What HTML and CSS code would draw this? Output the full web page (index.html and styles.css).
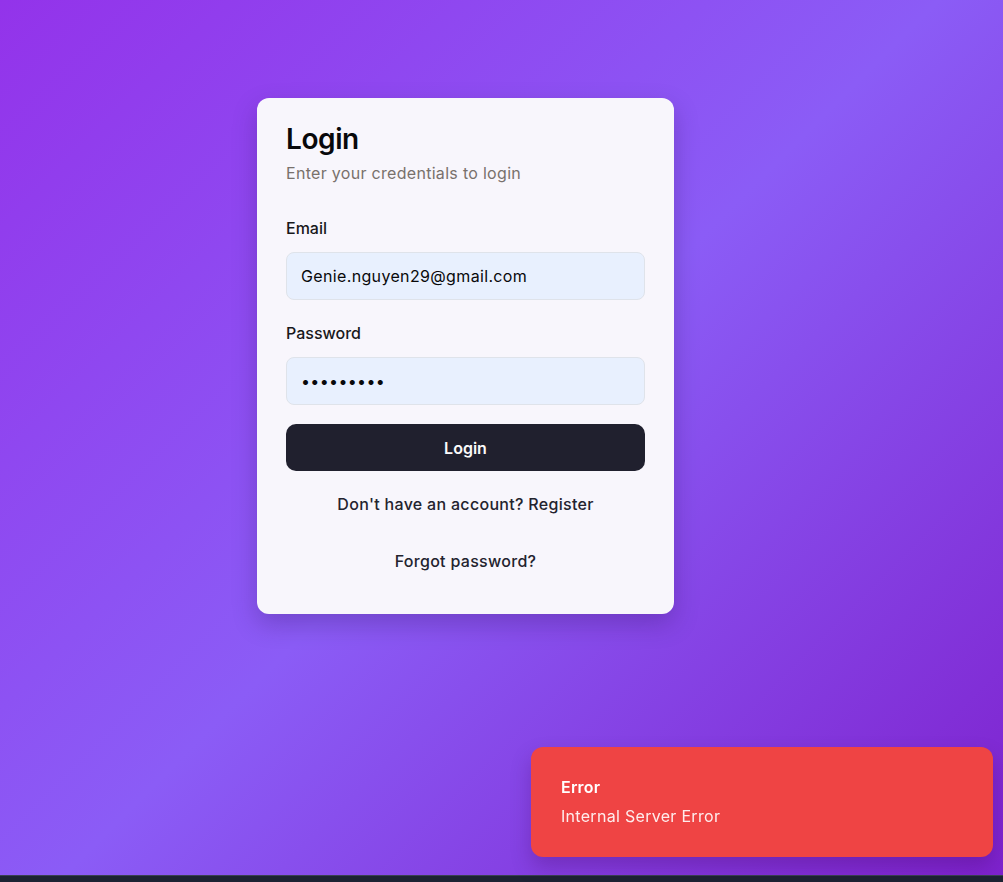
FILE: index.html
```html
<!DOCTYPE html>
<html lang="en">
<head>
<meta charset="utf-8">
<title>Login</title>
<link rel="stylesheet" href="styles.css">
</head>
<body>
<main class="page">
  <section class="card">
    <header class="card-header">
      <h1 class="title">Login</h1>
      <p class="subtitle">Enter your credentials to login</p>
    </header>
    <form class="form">
      <div class="field">
        <label class="label" for="email">Email</label>
        <input class="input" id="email" type="email" value="Genie.nguyen29@gmail.com">
      </div>
      <div class="field">
        <label class="label" for="password">Password</label>
        <input class="input" id="password" type="password" value="password1">
      </div>
      <button class="btn" type="button">Login</button>
    </form>
    <div class="links">
      <a class="link" href="#">Don't have an account? Register</a>
      <a class="link" href="#">Forgot password?</a>
    </div>
  </section>
</main>
<footer class="bottom-bar"></footer>
<div class="toast" role="alert">
  <div class="toast-title">Error</div>
  <div class="toast-msg">Internal Server Error</div>
</div>
</body>
</html>
```

FILE: styles.css
```css
* { box-sizing: border-box; }
html, body { margin: 0; padding: 0; }
body {
  font-family: Inter, "Noto Sans", sans-serif;
  color: #09090b;
  height: 882px;
  overflow: hidden;
  display: flex;
  flex-direction: column;
}
.page {
  flex: 1;
  background: linear-gradient(135deg, #9333ea 0%, #8b5cf6 50%, #7e22ce 100%);
  padding: 98px 0 0 257px;
}
.bottom-bar {
  height: 7px;
  background: #1c2333;
  border-top: 1px solid #3a4152;
}
.card {
  width: 417px;
  background: #f8f6fc;
  border-radius: 12px;
  box-shadow: 0 10px 25px rgba(40, 10, 80, 0.25);
  padding: 24px 29px 41px;
}
.title {
  margin: 0;
  font-size: 28px;
  line-height: 35px;
  font-weight: 600;
  letter-spacing: -0.4px;
}
.subtitle {
  margin: 4px 0 0;
  font-size: 16px;
  line-height: 24px;
  color: #78716c;
  letter-spacing: 0.3px;
}
.form {
  margin-top: 31px;
  display: flex;
  flex-direction: column;
}
.field {
  display: flex;
  flex-direction: column;
  gap: 12px;
  margin-bottom: 21px;
}
.field + .field { margin-bottom: 19px; }
.label {
  font-size: 16px;
  line-height: 24px;
  font-weight: 500;
  color: #18181b;
}
.input {
  height: 48px;
  border: 1px solid #dfe3ea;
  border-radius: 8px;
  background: #e8f0fe;
  padding: 0 14px;
  font-family: inherit;
  font-size: 16px;
  letter-spacing: 0.35px;
  color: #09090b;
  outline: none;
}
.btn {
  height: 47px;
  border: 0;
  border-radius: 10px;
  background: #20202e;
  color: #fafafa;
  font-family: inherit;
  font-size: 16px;
  font-weight: 600;
}
.links {
  margin-top: 21px;
  display: flex;
  flex-direction: column;
  align-items: center;
  gap: 33px;
}
.link {
  font-size: 16px;
  line-height: 24px;
  font-weight: 500;
  letter-spacing: 0.3px;
  color: #23232e;
  text-decoration: none;
}
.toast {
  position: fixed;
  right: 10px;
  bottom: 25px;
  width: 462px;
  height: 110px;
  background: #ef4444;
  border-radius: 12px;
  box-shadow: 0 10px 20px rgba(60, 0, 80, 0.25);
  padding: 28px 30px;
  color: #fff;
}
.toast-title {
  font-size: 16px;
  line-height: 24px;
  font-weight: 600;
  letter-spacing: 0.2px;
}
.toast-msg {
  margin-top: 5px;
  font-size: 16px;
  line-height: 24px;
  letter-spacing: 0.3px;
  color: rgba(255, 255, 255, 0.9);
}
```
